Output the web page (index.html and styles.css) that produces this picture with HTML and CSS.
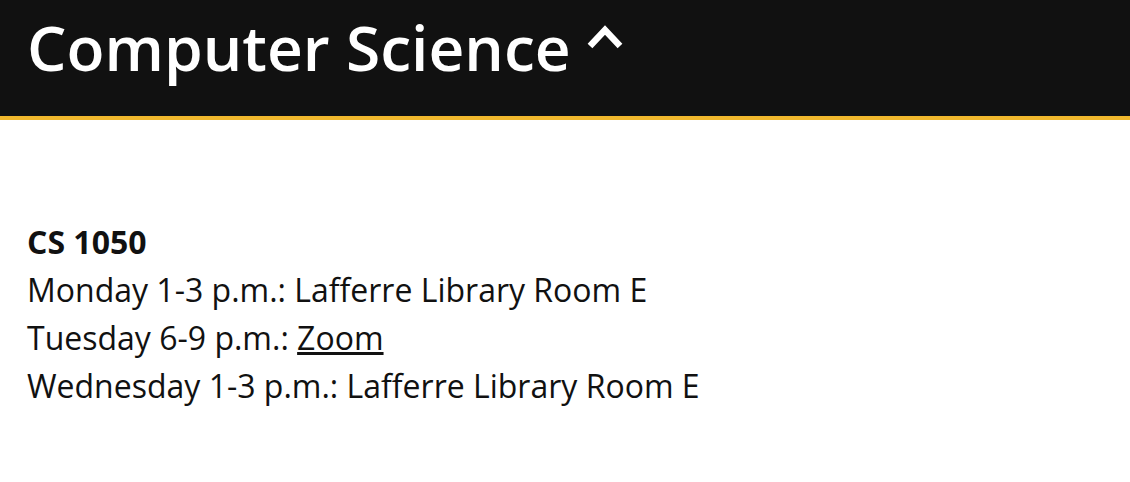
FILE: index.html
```html
<!DOCTYPE html>
<html lang="en">
<head>
<meta charset="utf-8">
<title>Computer Science</title>
<link rel="stylesheet" href="styles.css">
</head>
<body>
<header class="dept-header">
  <h1 class="dept-title">Computer Science<svg class="caret" viewBox="0 0 36 24" width="36" height="24" aria-hidden="true"><path d="M3 21 L18 5 L33 21" fill="none" stroke="#fff" stroke-width="6.5" stroke-linejoin="miter"/></svg></h1>
</header>
<main class="content">
  <section class="course">
    <h2 class="course-code">CS 1050</h2>
    <p class="slot">Monday 1-3 p.m.: Lafferre Library Room E</p>
    <p class="slot">Tuesday 6-9 p.m.: <a href="#" class="link">Zoom</a></p>
    <p class="slot">Wednesday 1-3 p.m.: Lafferre Library Room E</p>
  </section>
</main>
</body>
</html>
```
FILE: styles.css
```css
html, body {
  margin: 0;
  padding: 0;
  background: #fff;
}
body {
  font-family: "Open Sans", "Noto Sans", sans-serif;
  color: #111;
}
.dept-header {
  background: #111111;
  border-bottom: 4px solid #f1b82d;
  height: 116px;
  box-sizing: content-box;
  padding: 0 27px;
  display: flex;
  align-items: flex-start;
}
.dept-title {
  margin: 16px 0 0;
  color: #fff;
  font-size: 62.3px;
  font-weight: 600;
  line-height: 1;
  display: flex;
  align-items: flex-start;
  gap: 16px;
}
.caret {
  margin-top: 9px;
}
.content {
  padding: 98px 27px 0;
}
.course {
  font-size: 32px;
  line-height: 48px;
}
.course-code {
  margin: 0;
  font-size: 32px;
  font-weight: 700;
  line-height: 48px;
}
.slot {
  margin: 0;
}
.link {
  color: #111;
  text-decoration: underline;
}
```
